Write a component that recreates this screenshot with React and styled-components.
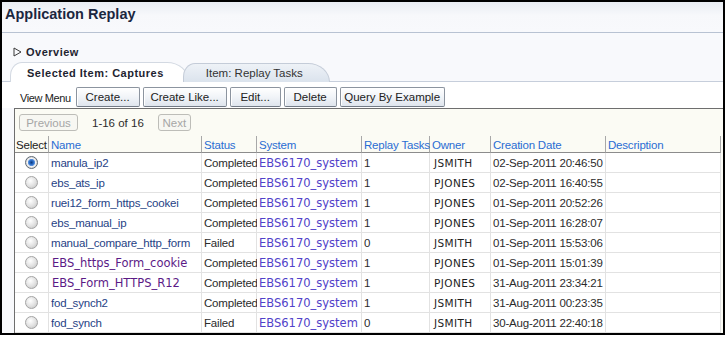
import React from 'react'
import styled, { createGlobalStyle, css } from 'styled-components'

const captures = [
  { name: 'manula_ip2', status: 'Completed', tasks: 1, owner: 'JSMITH', date: '02-Sep-2011 20:46:50', selected: true },
  { name: 'ebs_ats_ip', status: 'Completed', tasks: 1, owner: 'PJONES', date: '02-Sep-2011 16:40:55' },
  { name: 'ruei12_form_https_cookei', status: 'Completed', tasks: 1, owner: 'PJONES', date: '01-Sep-2011 20:52:26' },
  { name: 'ebs_manual_ip', status: 'Completed', tasks: 1, owner: 'PJONES', date: '01-Sep-2011 16:28:07' },
  { name: 'manual_compare_http_form', status: 'Failed', tasks: 0, owner: 'JSMITH', date: '01-Sep-2011 15:53:06' },
  { name: 'EBS_https_Form_cookie', status: 'Completed', tasks: 1, owner: 'PJONES', date: '01-Sep-2011 15:01:39', visited: true },
  { name: 'EBS_Form_HTTPS_R12', status: 'Completed', tasks: 1, owner: 'PJONES', date: '31-Aug-2011 23:34:21', visited: true },
  { name: 'fod_synch2', status: 'Completed', tasks: 1, owner: 'JSMITH', date: '31-Aug-2011 00:23:35' },
  { name: 'fod_synch', status: 'Failed', tasks: 0, owner: 'JSMITH', date: '30-Aug-2011 22:40:18' },
]

const columns = ['Select', 'Name', 'Status', 'System', 'Replay Tasks', 'Owner', 'Creation Date', 'Description']

const actions = [
  { label: 'Create...', w: 64 },
  { label: 'Create Like...', w: 84 },
  { label: 'Edit...', w: 51 },
  { label: 'Delete', w: 53 },
  { label: 'Query By Example', w: 105 },
]

const App = () => {
  return (
    <>
      <GlobalStyle />
      <Frame>
        <Header>
          <Title>Application Replay</Title>
        </Header>

        <Overview>
          <svg width="9" height="10" viewBox="0 0 9 10">
            <polygon points="1,1 8,5 1,9" fill="none" stroke="#3a3a3a" strokeWidth="1" />
          </svg>
          <span>Overview</span>
        </Overview>

        <TabBar>
          <Tab $active>Selected Item: Captures</Tab>
          <Tab>Item: Replay Tasks</Tab>
        </TabBar>

        <Toolbar>
          <MenuLabel>View Menu</MenuLabel>
          {actions.map(a => (
            <ToolButton key={a.label} $w={a.w}>{a.label}</ToolButton>
          ))}
        </Toolbar>

        <Panel>
          <Pager>
            <PageButton $w={59}>Previous</PageButton>
            <PageInfo>1-16 of 16</PageInfo>
            <PageButton $w={33}>Next</PageButton>
          </Pager>

          <Grid>
            {columns.map(c => (
              <HeadCell key={c} $plain={c === 'Select'}>{c}</HeadCell>
            ))}
            {captures.map(row => (
              <React.Fragment key={row.name}>
                <Cell $center><Radio $on={row.selected} /></Cell>
                <Cell><NameLink $visited={row.visited}>{row.name}</NameLink></Cell>
                <Cell>{row.status}</Cell>
                <Cell><SystemLink>EBS6170_system</SystemLink></Cell>
                <Cell>{row.tasks}</Cell>
                <Cell><Owner>{row.owner}</Owner></Cell>
                <Cell>{row.date}</Cell>
                <Cell />
              </React.Fragment>
            ))}
          </Grid>
        </Panel>
      </Frame>
    </>
  )
}

const GlobalStyle = createGlobalStyle`
  html, body {
    margin: 0;
    background: #ffffff;
  }
  body {
    font-family: 'Liberation Sans', Arial, sans-serif;
    font-size: 11px;
    color: #2b2b2b;
  }
`

const Frame = styled.div`
  width: 725px;
  height: 335px;
  box-sizing: border-box;
  border: 2px solid #000;
  display: flex;
  flex-direction: column;
  overflow: hidden;
  background: #f8f9fc;
`

const Header = styled.div`
  height: 31px;
  box-sizing: border-box;
  padding: 4px 3px 0;
  border-bottom: 1px solid #b8c2d2;
  background: linear-gradient(#e9edf3, #f7f8fb 45%, #f8f9fc);
`

const Title = styled.h1`
  margin: 0;
  font-size: 14.5px;
  line-height: 16px;
  font-weight: bold;
  color: #1b2740;
`

const Overview = styled.div`
  display: flex;
  align-items: center;
  gap: 4px;
  margin-top: 12px;
  padding-left: 11px;
  height: 14px;
  font-size: 11px;
  font-weight: bold;
  letter-spacing: 0.5px;
  color: #1e2430;
`

const TabBar = styled.div`
  display: flex;
  align-items: flex-end;
  height: 20px;
  margin-top: 2px;
  padding-left: 8px;
  border-bottom: 1px solid #c6cedb;
`

const Tab = styled.div`
  position: relative;
  height: 19px;
  box-sizing: border-box;
  display: flex;
  align-items: center;
  margin-bottom: -1px;
  font-size: 11.5px;
  border: 1px solid #c4ccd8;
  border-bottom: none;
  border-radius: 12px 22px 0 0 / 14px 19px 0 0;
  padding: 0 26px 0 22px;
  margin-left: -6px;
  z-index: 2;
  color: #333;
  background: linear-gradient(#eef2f7, #dbe3ed);

  ${p => p.$active && css`
    height: 20px;
    margin-left: 0;
    padding: 0 24px 0 16px;
    z-index: 1;
    font-size: 11px;
    font-weight: bold;
    letter-spacing: 0.5px;
    color: #1e2430;
    background: #ffffff;
    border-color: #d3d9e2;
  `}
`

const Toolbar = styled.div`
  display: flex;
  align-items: flex-start;
  gap: 3px;
  height: 26px;
  box-sizing: border-box;
  padding: 5px 0 0 18px;
  background: #ffffff;
`

const MenuLabel = styled.span`
  align-self: center;
  margin: 0 2px 0 0;
  padding-top: 1px;
  letter-spacing: -0.4px;
  color: #222;
`

const ToolButton = styled.button`
  width: ${p => p.$w}px;
  height: 20px;
  padding: 0;
  font-family: inherit;
  font-size: 11.5px;
  color: #222;
  border: 1px solid #8c949f;
  border-bottom-color: #737b87;
  border-radius: 2px;
  background: linear-gradient(#ffffff, #f1f4f8 50%, #dfe5ed);
  box-shadow: inset 1px 1px 0 #ffffff;
`

const Panel = styled.div`
  flex: 1;
  margin-left: 12px;
  border-left: 1px solid #6e6e6e;
  border-top: 1px solid #6e6e6e;
  background: #fbfbf4;
`

const Pager = styled.div`
  display: flex;
  align-items: center;
  gap: 14px;
  height: 17px;
  padding: 5px 0 0 4px;
  font-size: 11.5px;
`

const PageButton = styled.span`
  width: ${p => p.$w}px;
  height: 17px;
  box-sizing: border-box;
  display: flex;
  align-items: center;
  justify-content: center;
  border: 1px solid #bdbdb8;
  border-radius: 3px;
  background: #f7f7f2;
  color: #a6a6a6;
`

const PageInfo = styled.span`
  color: #2b2b2b;
`

const Grid = styled.div`
  display: grid;
  grid-template-columns: 34px 153px 55px 105px 68px 61px 115px 115px;
  margin-top: 5px;
`

const HeadCell = styled.div`
  height: 17px;
  box-sizing: border-box;
  display: flex;
  align-items: center;
  padding: 1px 1px 0 2px;
  border-right: 1px solid #a8a8a8;
  border-bottom: 1px solid #8c8c8c;
  white-space: nowrap;
  font-size: 11.5px;
  letter-spacing: -0.2px;
  color: ${p => (p.$plain ? '#222' : '#2a6dd3')};
  ${p => p.$plain && css`padding-left: 1px;`}
`

const Cell = styled.div`
  height: 20px;
  box-sizing: border-box;
  display: flex;
  align-items: center;
  justify-content: ${p => (p.$center ? 'center' : 'flex-start')};
  padding: 0 2px;
  background: #ffffff;
  border-right: 1px solid #e2e2e2;
  border-bottom: 1px solid #e2e2e2;
  white-space: nowrap;
  font-size: 11.5px;
  letter-spacing: -0.2px;
  color: #2b2b2b;
`

const Radio = styled.span`
  width: 13px;
  height: 13px;
  box-sizing: border-box;
  border-radius: 50%;
  border: 1px solid #a3a3a3;
  background: radial-gradient(circle at 40% 35%, #ffffff, #e0e0e0 55%, #bdbdbd);

  ${p => p.$on && css`
    border-color: #5f6973;
    background: radial-gradient(circle at 50% 50%, #0c3a80 0, #2a6bc5 2px, #5c93dd 3.2px, #f4f4f4 4px, #cfcfcf 6px);
  `}
`

const NameLink = styled.span`
  color: #1f3f85;

  ${p => p.$visited && css`
    font-family: 'DejaVu Sans', Verdana, sans-serif;
    font-size: 11.5px;
    letter-spacing: 0;
    color: #5b1a86;
    padding-left: 1px;
  `}
`

const SystemLink = styled.span`
  font-family: 'DejaVu Sans', Verdana, sans-serif;
  font-size: 11.5px;
  letter-spacing: 0;
  color: #5142c9;
`

const Owner = styled.span`
  font-family: 'DejaVu Sans', Verdana, sans-serif;
  font-size: 10.5px;
  letter-spacing: 0.4px;
  padding-left: 2px;
  color: #1e1e1e;
`

export default App
